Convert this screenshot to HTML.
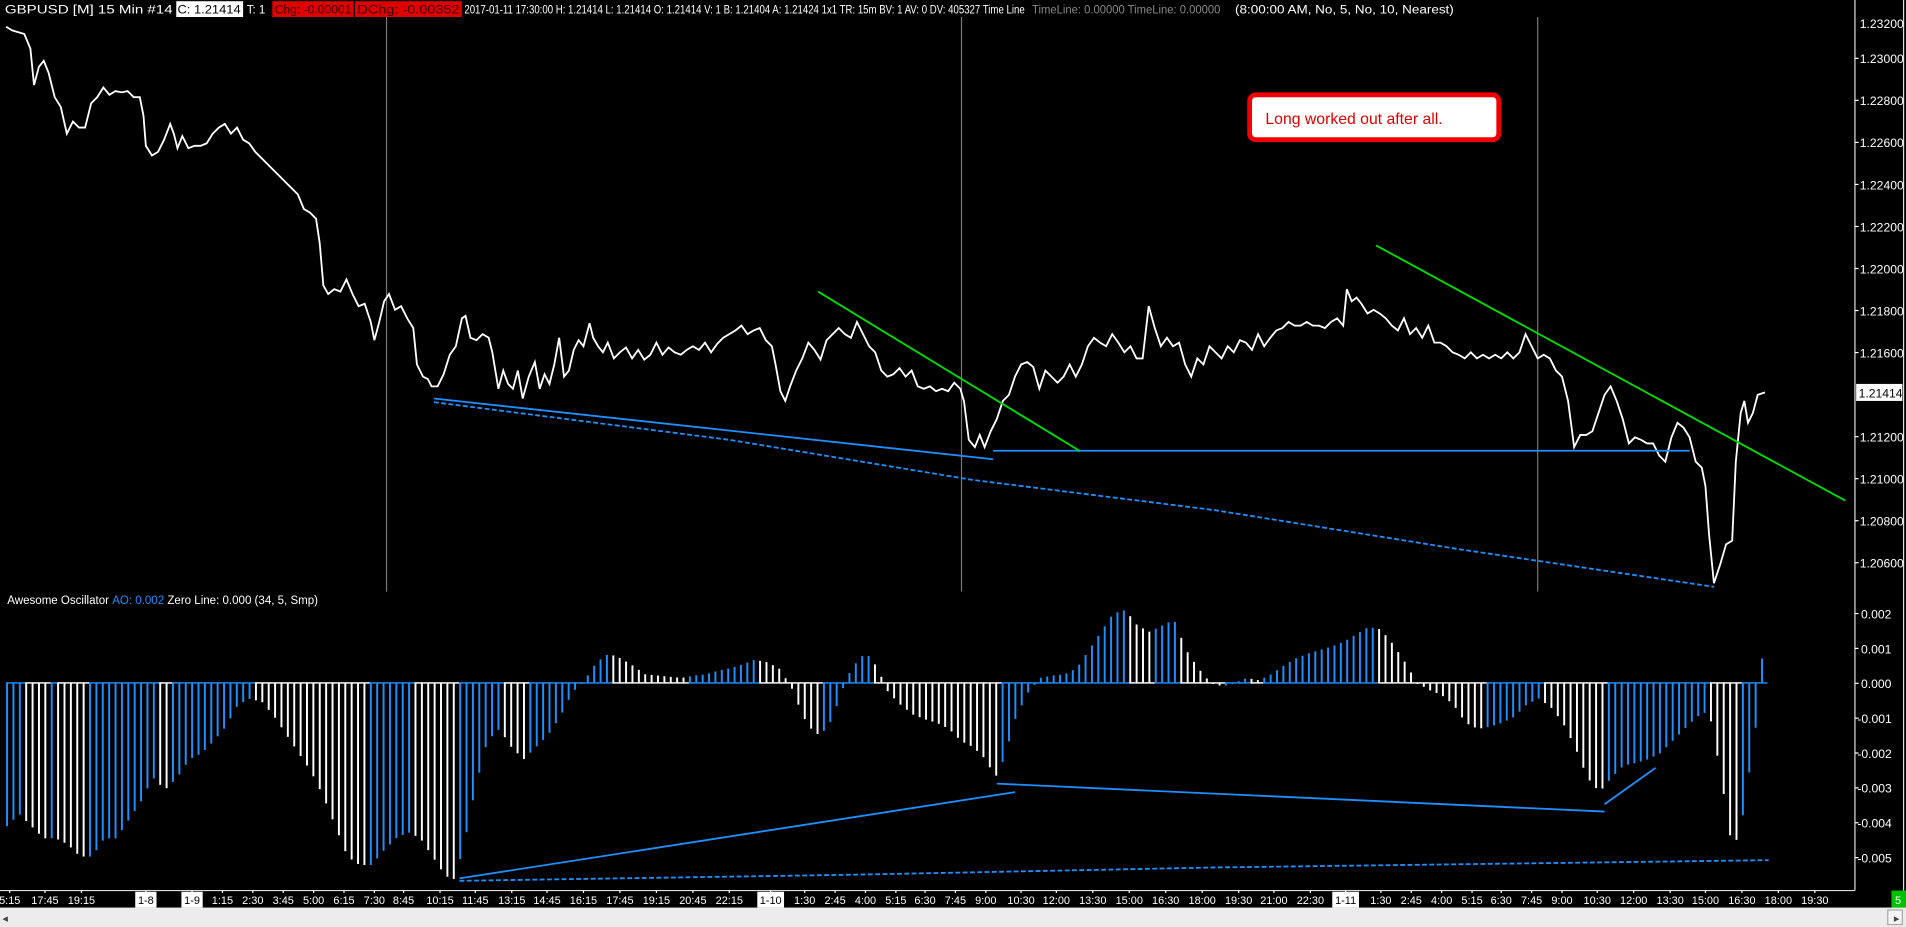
<!DOCTYPE html>
<html><head><meta charset="utf-8"><style>
html,body{margin:0;padding:0;background:#000;width:1906px;height:927px;overflow:hidden}
svg{display:block}
text{font-family:"Liberation Sans",sans-serif}
</style></head><body>
<svg id="s" width="1906" height="927" viewBox="0 0 1568 763" preserveAspectRatio="none">
<rect width="1568" height="763" fill="#000"/>
<g font-size="9.5" fill="#fff">
<text x="4" y="11" textLength="138" lengthAdjust="spacingAndGlyphs">GBPUSD [M]  15 Min   #14</text>
<rect x="145" y="1" width="55" height="13" fill="#fff"/><text x="146" y="11" fill="#000" textLength="52" lengthAdjust="spacingAndGlyphs">C: 1.21414</text>
<text x="203" y="11">T: 1</text>
<rect x="224" y="1" width="67" height="13" fill="#e00000"/><text x="226" y="11" fill="#300" textLength="63" lengthAdjust="spacingAndGlyphs">Chg: -0.00001</text>
<rect x="292" y="1" width="88" height="13" fill="#e00000"/><text x="294" y="11" fill="#300" textLength="84" lengthAdjust="spacingAndGlyphs">DChg: -0.00352</text>
<text x="382" y="11" textLength="461" lengthAdjust="spacingAndGlyphs">2017-01-11 17:30:00 H: 1.21414 L: 1.21414 O: 1.21414 V: 1 B: 1.21404 A: 1.21424 1x1 TR: 15m BV: 1 AV: 0 DV: 405327 Time Line</text>
<text x="849" y="11" fill="#888" textLength="155" lengthAdjust="spacingAndGlyphs">TimeLine: 0.00000   TimeLine: 0.00000</text>
<text x="1016" y="11" textLength="180" lengthAdjust="spacingAndGlyphs">(8:00:00 AM, No, 5, No, 10, Nearest)</text>
</g>
<g stroke="#777" stroke-width="1"><line x1="318" y1="14" x2="318" y2="487"/><line x1="791" y1="14" x2="791" y2="487"/><line x1="1265" y1="14" x2="1265" y2="487"/></g>
<line x1="1526" y1="0" x2="1526" y2="733" stroke="#ddd"/>
<line x1="1566" y1="0" x2="1566" y2="733" stroke="#ddd"/>
<line x1="0" y1="733" x2="1526" y2="733" stroke="#ddd"/>
<g id="axis" font-size="10" fill="#fff"></g>
<rect x="1527" y="316" width="38" height="14" fill="#fff"/><text x="1529" y="327" font-size="10" fill="#000">1.21414</text>
<polyline id="price" fill="none" stroke="#fff" stroke-width="1.5"/>
<g fill="none" stroke-width="1.5">
<line x1="357" y1="328" x2="817" y2="378" stroke="#1e8fff"/>
<polyline points="357,331 600,362 800,395 1000,420 1200,452 1410,483" stroke="#1e8fff" stroke-dasharray="4,2"/>
<line x1="817" y1="371" x2="1390" y2="371" stroke="#1e8fff"/>
<line x1="673" y1="240" x2="888" y2="371" stroke="#00e000"/>
<line x1="1132" y1="202" x2="1518" y2="412" stroke="#00e000"/>
</g>
<rect x="1028" y="78" width="205" height="37" rx="5" fill="#fff" stroke="#f00000" stroke-width="4"/>
<text x="1041" y="102" font-size="13" fill="#e00000">Long worked out after all.</text>
<text x="6" y="497" font-size="9.5" fill="#fff">Awesome Oscillator <tspan fill="#1e8fff">AO: 0.002</tspan>  Zero Line: 0.000   (34, 5, Smp)</text>
<g id="bars"></g>
<g fill="none" stroke-width="1.5">
<line x1="378" y1="723" x2="835" y2="652" stroke="#1e8fff"/>
<line x1="820" y1="645" x2="1320" y2="668" stroke="#1e8fff"/>
<line x1="1320" y1="662" x2="1362" y2="632" stroke="#1e8fff"/>
<polyline points="378,725 700,720 1000,714 1455,708" stroke="#1e8fff" stroke-dasharray="4,2"/>
</g>
<g id="time" font-size="9" fill="#fff"></g>
<rect x="1556" y="733" width="12" height="14" fill="#00c000"/><text x="1559" y="744" font-size="9" fill="#fff">5</text>
<rect x="0" y="747" width="1568" height="16" fill="#ececec"/>
<rect x="1553" y="749" width="12" height="12" fill="#f4f4f4" stroke="#aaa"/>
<text x="2" y="759" font-size="9" fill="#444">&#9666;</text><text x="1558" y="759" font-size="9" fill="#444">&#9656;</text>
</svg>
<script>
var NS="http://www.w3.org/2000/svg";
function el(t,a,p){var e=document.createElementNS(NS,t);for(var k in a)e.setAttribute(k,a[k]);p.appendChild(e);return e;}
var P="5,22 10,25 20,28 25,40 28,70 32,55 36,50 40,60 45,80 50,88 55,110 60,100 65,105 70,105 75,85 80,80 85,72 90,78 95,75 100,76 105,75 110,80 115,80 118,95 120,120 125,128 130,125 135,115 140,102 143,110 146,122 150,112 155,122 160,120 165,120 170,118 175,110 180,105 185,102 190,110 195,105 200,115 205,118 210,125 215,130 220,135 225,140 230,145 235,150 240,155 245,160 250,172 255,175 260,180 263,200 266,235 270,242 275,238 280,240 285,230 290,242 295,252 300,250 305,265 308,280 312,265 316,248 320,242 325,255 330,252 335,262 340,270 343,300 348,310 352,312 355,318 360,318 365,308 370,292 375,285 380,262 383,260 387,278 392,280 397,275 402,278 405,290 410,320 414,305 418,316 422,320 426,305 430,328 435,310 440,298 444,320 448,308 452,316 456,300 460,278 464,310 468,305 472,288 476,280 480,285 485,266 488,278 492,285 496,290 500,282 505,295 510,290 515,286 520,295 525,288 530,296 535,292 540,282 545,292 550,286 555,290 560,292 565,288 570,285 575,288 580,282 585,290 590,283 595,278 600,275 605,272 610,268 615,275 620,272 625,270 630,280 635,285 638,300 642,322 646,330 650,318 655,305 660,295 665,282 670,288 675,296 680,280 685,275 690,270 695,275 700,278 705,265 710,275 715,285 720,290 725,305 730,310 735,308 740,303 745,310 750,305 755,318 760,320 765,318 770,322 775,320 780,322 785,315 790,320 793,330 797,362 802,368 806,358 810,368 815,355 820,345 825,330 830,325 835,310 840,300 845,298 850,302 855,320 860,305 865,310 870,315 875,310 880,300 885,310 890,300 895,285 900,278 905,282 910,285 915,275 920,282 925,290 930,285 935,295 940,295 945,252 950,270 955,285 960,278 965,285 970,282 975,300 980,310 985,295 990,300 995,285 1000,290 1005,295 1010,285 1015,290 1020,280 1025,282 1030,288 1035,275 1040,285 1045,278 1050,272 1055,270 1060,265 1065,268 1070,268 1075,265 1080,268 1085,268 1090,270 1095,265 1100,262 1105,268 1108,238 1112,248 1116,245 1120,250 1125,258 1130,255 1135,258 1140,262 1145,268 1150,272 1155,262 1160,275 1165,270 1170,278 1175,268 1180,282 1185,282 1190,285 1195,290 1200,292 1205,295 1210,290 1215,295 1220,292 1225,295 1230,292 1235,295 1240,290 1245,295 1250,290 1255,275 1260,285 1265,295 1270,292 1275,295 1280,305 1285,310 1290,330 1295,368 1300,358 1305,358 1310,355 1315,340 1320,325 1325,318 1330,330 1335,345 1340,365 1345,360 1350,362 1355,365 1360,365 1365,375 1370,380 1375,360 1380,348 1385,352 1390,360 1395,380 1400,385 1403,400 1406,440 1410,480 1415,465 1420,448 1425,445 1428,380 1432,340 1435,330 1438,348 1442,340 1446,325 1452,323";
document.getElementById("price").setAttribute("points",P);
var ax=document.getElementById("axis");
var labs=["1.23000","1.22800","1.22600","1.22400","1.22200","1.22000","1.21800","1.21600","","1.21200","1.21000","1.20800","1.20600"];
el("text",{x:1530,y:23},ax).textContent="1.23200";
labs.forEach(function(l,i){if(!l)return;var y=48+i*34.6;el("line",{x1:1526,y1:y,x2:1529,y2:y,stroke:"#fff"},ax);el("text",{x:1530,y:y+4},ax).textContent=l;});
var ol=["0.002","0.001","0.000","-0.001","-0.002","-0.003","-0.004","-0.005"];
ol.forEach(function(l,i){var y=505+i*28.7;el("line",{x1:1526,y1:y,x2:1529,y2:y,stroke:"#fff"},ax);el("text",{x:l[0]=="-"?1528:1531,y:y+4},ax).textContent=l;});
var E="5,680 15,670 25,680 35,690 45,690 55,695 65,705 75,705 85,690 95,690 105,675 115,660 125,640 135,650 145,640 155,625 165,620 175,610 185,598 195,580 205,575 215,578 225,590 235,605 245,620 255,635 265,655 275,680 285,705 295,712 305,712 315,700 325,690 335,685 345,690 355,705 365,720 372,725 380,700 390,650 400,610 410,600 420,615 430,625 440,615 450,605 460,590 470,570 480,560 490,545 500,538 510,542 520,548 530,555 540,556 550,557 560,558 570,556 580,555 590,552 600,550 610,547 620,543 630,545 640,550 650,565 660,590 670,605 680,600 688,580 695,560 700,550 708,540 715,540 722,552 730,570 740,580 750,588 760,592 770,595 780,600 790,610 800,615 810,625 818,640 825,625 835,590 845,570 855,558 865,556 875,555 885,550 895,535 905,520 915,505 925,502 935,515 945,520 955,515 965,510 975,535 985,550 995,562 1005,565 1015,562 1025,558 1035,560 1045,555 1055,548 1065,542 1075,538 1085,535 1095,532 1105,528 1115,522 1125,516 1135,518 1145,530 1155,545 1165,562 1175,568 1185,572 1195,580 1205,595 1215,600 1225,598 1235,595 1245,590 1255,580 1265,575 1275,582 1285,595 1295,615 1305,640 1315,652 1325,640 1335,630 1345,628 1355,625 1365,620 1375,610 1385,600 1395,590 1405,585 1410,610 1415,640 1420,670 1425,705 1430,680 1435,665 1440,620 1445,590 1448,548 1452,516".split(" ").map(function(s){return s.split(",").map(Number);});
function f(x){for(var i=1;i<E.length;i++){if(x<=E[i][0]){var a=E[i-1],b=E[i];return a[1]+(b[1]-a[1])*(x-a[0])/(b[0]-a[0]);}}return E[E.length-1][1];}
var bg=document.getElementById("bars"),Z=562,prev=null,st=5.25;
for(var x=5;x<=1452;x+=st){var y=f(x);var v=Z-y;var c=(prev===null||v>=prev)?"#1e8fff":"#fff";prev=v;
el("rect",{x:x,y:Math.min(y,Z),width:1.6,height:Math.max(Math.abs(Z-y),1),fill:c},bg);
el("rect",{x:x,y:Z-0.5,width:st,height:1.2,fill:c},bg);}
var T=[[8,"5:15"],[37,"17:45"],[67,"19:15"],[120,"1-8",1],[158,"1-9",1],[183,"1:15"],[208,"2:30"],[233,"3:45"],[258,"5:00"],[283,"6:15"],[308,"7:30"],[332,"8:45"],[362,"10:15"],[391,"11:45"],[421,"13:15"],[450,"14:45"],[480,"16:15"],[510,"17:45"],[540,"19:15"],[570,"20:45"],[600,"22:15"],[634,"1-10",1],[662,"1:30"],[687,"2:45"],[712,"4:00"],[737,"5:15"],[761,"6:30"],[786,"7:45"],[811,"9:00"],[840,"10:30"],[869,"12:00"],[899,"13:30"],[929,"15:00"],[959,"16:30"],[989,"18:00"],[1019,"19:30"],[1048,"21:00"],[1078,"22:30"],[1107,"1-11",1],[1136,"1:30"],[1161,"2:45"],[1186,"4:00"],[1211,"5:15"],[1235,"6:30"],[1260,"7:45"],[1285,"9:00"],[1314,"10:30"],[1344,"12:00"],[1374,"13:30"],[1403,"15:00"],[1433,"16:30"],[1463,"18:00"],[1493,"19:30"]];
var tg=document.getElementById("time");
T.forEach(function(t){var w=t[1].length*4.5;if(t[2])el("rect",{x:t[0]-w/2-2,y:734,width:w+4,height:13,fill:"#fff"},tg);
el("line",{x1:t[0],y1:733,x2:t[0],y2:735,stroke:"#fff"},tg);
var e=el("text",{x:t[0],y:744,"text-anchor":"middle",fill:t[2]?"#000":"#fff"},tg);e.textContent=t[1];});
</script>
</body></html>
